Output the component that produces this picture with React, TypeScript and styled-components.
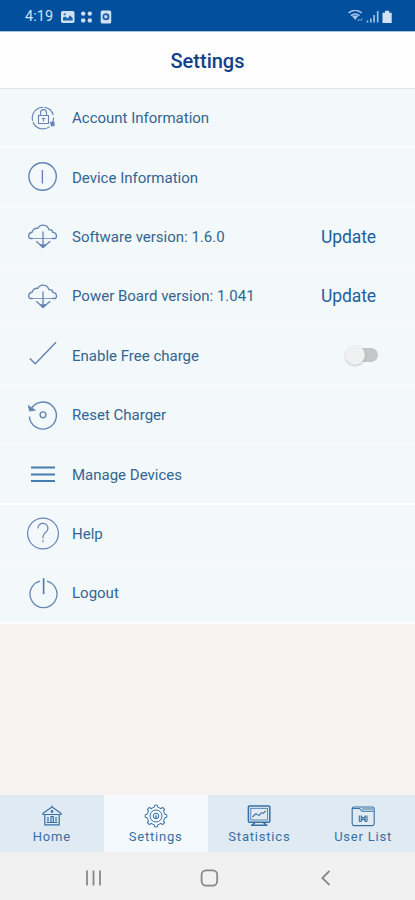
import React from "react";
import styled, { createGlobalStyle } from "styled-components";

const GlobalStyle = createGlobalStyle`
  * { box-sizing: border-box; }
  html, body { margin: 0; padding: 0; }
  body { font-family: Roboto, "Liberation Sans", sans-serif; background: #f7f1f1; }
  button { font: inherit; border: 0; padding: 0; background: none; color: inherit; }
  svg { display: block; flex: none; }
`;

const Screen = styled.div`
  display: flex;
  flex-direction: column;
  width: 415px;
  height: 900px;
  overflow: hidden;
  background: #f7f1f1;
`;

const StatusBar = styled.div`
  display: flex;
  align-items: center;
  flex: none;
  height: 31px;
  padding: 2px 22px 0 25px;
  background: #02509d;
  color: #cfe0f5;
`;

const Clock = styled.span`
  width: 36px;
  font-size: 14.5px;
  line-height: 18px;
  letter-spacing: 0.1px;
`;

const StatusSpacer = styled.div`
  flex: 1;
`;

const Header = styled.header`
  display: flex;
  align-items: center;
  justify-content: center;
  flex: none;
  height: 58px;
  padding-top: 1px;
  background: #fefefe;
  border-top: 1px solid #a9c3de;
  border-bottom: 1px solid #dfe4e8;
`;

const Title = styled.h1`
  margin: 0;
  font-size: 20px;
  line-height: 24px;
  font-weight: 500;
  color: #12418a;
`;

const List = styled.div`
  flex: none;
`;

const Row = styled.div<{ $line: string }>`
  display: flex;
  align-items: center;
  height: 59.4px;
  padding: 0 36px 0 26px;
  background: #f3f8fb;
  border-bottom: 2px solid ${(p) => p.$line};
  color: #326591;
`;

const IconSlot = styled.div`
  display: flex;
  justify-content: center;
  width: 34px;
  margin-right: 12px;
  color: #6485b5;
`;

const Label = styled.span`
  flex: 1;
  padding-top: 1px;
  font-size: 15px;
  line-height: 20px;
  white-space: nowrap;
`;

const UpdateButton = styled.button`
  width: 58px;
  padding-top: 1px;
  text-align: left;
  font-size: 17.5px;
  line-height: 22px;
  letter-spacing: -0.1px;
  color: #1b609c;
`;

const SwitchTrack = styled.div`
  position: relative;
  width: 28px;
  height: 14px;
  margin-right: 1px;
  border-radius: 7px;
  background: #c4c6c7;
`;

const SwitchKnob = styled.div`
  position: absolute;
  left: -5px;
  top: -3px;
  width: 20px;
  height: 20px;
  border-radius: 50%;
  background: #eff0f0;
  box-shadow: 0 1px 2px rgba(0, 0, 0, 0.22);
`;

const Filler = styled.div`
  flex: 1;
`;

const TabBar = styled.nav`
  display: grid;
  grid-template-columns: repeat(4, 1fr);
  flex: none;
  height: 57px;
`;

const Tab = styled.button<{ $active?: boolean }>`
  display: flex;
  flex-direction: column;
  align-items: center;
  padding-top: 9px;
  background: ${(p) => (p.$active ? "#f3f9fd" : "#e0eaf2")};
  color: #3770a4;
`;

const TabLabel = styled.span`
  margin-top: 1px;
  font-size: 13px;
  line-height: 16px;
  letter-spacing: 0.8px;
  white-space: nowrap;
`;

const SystemNav = styled.div`
  display: flex;
  align-items: center;
  flex: none;
  height: 48px;
  padding: 4px 82px 0;
  justify-content: space-between;
  background: #f1f1f1;
  color: #888;
`;

type StrokeProps = { w: number; h?: number; sw?: number; children: React.ReactNode };

const Stroke = ({ w, h = w, sw = 1.3, children }: StrokeProps) => (
  <svg width={w} height={h} viewBox={`0 0 ${w} ${h}`} fill="none" stroke="currentColor" strokeWidth={sw}>
    {children}
  </svg>
);

const AccountIcon = () => (
  <Stroke w={32} sw={1.1}>
    <path d="M22.6 24.6A10.8 10.8 0 1 1 26.3 13" strokeDasharray="20 1.2" />
    <path d="M26.6 15.5q0 2.5-1 4.6" />
    <path d="M23.6 20.4l3.3-.4.2 3.6-2.6.2z" fill="currentColor" />
    <path d="M11.5 13.5h10v8h-10zM13.5 13.5v-2.9a3 3 0 0 1 6 0v2.9M16.5 15.8v3.8M14.8 16.5h3.4" />
  </Stroke>
);

const DeviceIcon = () => (
  <Stroke w={32} sw={1.4}>
    <circle cx="15.6" cy="15.5" r="13.7" />
    <path d="M15.4 9v13.5" />
  </Stroke>
);

const CloudIcon = () => (
  <Stroke w={32}>
    <path d="M5.5 18.5H3.2C.8 17.5 1.1 12.8 5.3 12 5.8 9 8.8 7.7 10.7 8.5c2.4-4.6 9.2-4.7 11.2 1.1 2.3-.3 3.8.8 3.6 2.5 4.2.2 5 5 2.8 6.4h-3.1" />
    <path d="M3.5 18.5h25" strokeWidth="1" opacity=".8" />
    <path d="M16 11.5v15.5M9.2 21.2l6.8 6 7.2-6" />
    <path d="M13.4 25l2.6 2.5 2.8-2.5z" fill="currentColor" />
  </Stroke>
);

const CheckIcon = () => (
  <Stroke w={32} sw={1.5}>
    <path d="M2.8 19.5l5.5 5.2L29 3.2" />
  </Stroke>
);

const ResetIcon = () => (
  <Stroke w={32} sw={1.4}>
    <path d="M3.8 10.5A13.5 13.5 0 1 1 2.4 17.5" />
    <path d="M1.8 7.2l1 4.6 4.6-.8z" fill="currentColor" />
    <circle cx="16" cy="15.8" r="2.9" />
  </Stroke>
);

const MenuIcon = () => (
  <Stroke w={24} h={18} sw={2}>
    <path d="M0 2.5h24M0 9.4h24M0 16h24" stroke="#477dae" />
  </Stroke>
);

const HelpIcon = () => (
  <Stroke w={34} sw={1.2}>
    <circle cx="17" cy="17.5" r="15.4" />
    <path d="M11.9 12.5c.2-7.2 10.5-6.5 10 .2-.3 4-4.9 3.7-4.9 8v1.8M17 24.3v2" />
  </Stroke>
);

const LogoutIcon = () => (
  <Stroke w={32} sw={1.3}>
    <path d="M13 4.1a13.5 13.5 0 1 0 7 0" />
    <path d="M16.6 1.2v16" strokeWidth="1.6" stroke="#477dae" />
  </Stroke>
);

const HomeIcon = () => (
  <Stroke w={24} sw={1.2}>
    <path d="M3 9.2L12 3l9 6.2v1.3H3zM4.8 10.5v10.3h14.4V10.5M4.5 20.8h15M12 3V1.4M8 13v4.5M11 12.5h2.3v6H11zM16 13v4.5M6.5 18.5h11" />
    <circle cx="12" cy="7.5" r=".8" />
  </Stroke>
);

const teeth = Array.from({ length: 8 }, (_, i) => i * 45);

const GearIcon = () => (
  <Stroke w={24} sw={1}>
    <circle cx="12" cy="12" r="6" />
    <circle cx="12" cy="12" r="2.8" />
    {teeth.map((a) => (
      <path key={a} d="M8.6 3.8l1.6-.5.4-2.1h2.8l.4 2.1 1.6.5" transform={`rotate(${a} 12 12)`} />
    ))}
    <path d="M12 10.8v2.4M10.8 13.2h2.4" />
  </Stroke>
);

const ChartIcon = () => (
  <Stroke w={24} sw={1.5}>
    <rect x="1.4" y="2" width="21.4" height="16.3" rx="1" />
    <rect x="3.8" y="4.3" width="16.6" height="11.7" strokeWidth=".8" />
    <path d="M5.5 13l3.4-3.4 3.2 2 2.3-3 1.8.8 2.5-2.6" strokeWidth="1.1" />
    <path d="M8 18.5L5 21.3M16.4 18.5l3 2.8M4 21.3h16.5" />
  </Stroke>
);

const FolderIcon = () => (
  <Stroke w={24} sw={1.1}>
    <rect x="1.2" y="3" width="22" height="18.6" rx="1.8" />
    <path d="M1.5 4.5h7l2.5 2.8h11.8M11 5h11" />
    <path d="M8.3 11.5v6M10.2 11.5v6M14.2 11.5v6M16 11.5v6M8.3 17.5h2M14 17.5h2M10.2 12l4 5M14.2 12l-4 5" />
  </Stroke>
);

const StatusGlyphs = () => (
  <svg width="52" height="14" viewBox="0 0 52 14" fill="#cfe0f5">
    <rect x="0" y="1" width="13.5" height="12" rx="1.8" />
    <path d="M2 10.5V7.5l2.5-1 2.2 2 2.3-3.2 2.7 3v2.2z" fill="#1d63aa" />
    <circle cx="3.6" cy="4.2" r="1" fill="#1d63aa" />
    <circle cx="22.2" cy="3.6" r="2.2" />
    <circle cx="28.8" cy="3.6" r="2.2" />
    <circle cx="22.2" cy="10.4" r="2.2" />
    <circle cx="28.8" cy="10.4" r="2.2" />
    <rect x="39.7" y=".5" width="10.5" height="13" rx="1.6" />
    <circle cx="45" cy="6.8" r="3.5" fill="#1d63aa" />
    <path d="M43.4 5.2h1.9a1.6 1.6 0 1 1-1.9 2.2z" />
  </svg>
);

const SignalGlyphs = () => (
  <svg width="45" height="14" viewBox="0 0 45 14" fill="none" stroke="#a9c6e8" strokeWidth="1.6">
    <path d="M.5 3C4.5-.4 9.8-.4 13.8 3M2.8 5.6c2.7-2 6-2 8.7 0" />
    <path d="M3.6 5.6h7L7.2 10z" fill="#a9c6e8" stroke="none" />
    <path d="M10 11l1.5-2M12.7 10.6l1.4-2" strokeWidth="1" />
    <path d="M19.5 12.5v-2M22.8 12.5v-4M26.1 12.5V5M29.7 12.5V1" />
    <path d="M34.5 2.7h2.5V.7h4.2v2h2.5v10.3h-9.2z" fill="#d3e2f2" stroke="none" />
  </svg>
);

type Item = { label: string; icon: React.ReactNode; line: string; action?: "update" | "switch" };

const items: Item[] = [
  { label: "Account Information", icon: <AccountIcon />, line: "#fbfeff" },
  { label: "Device Information", icon: <DeviceIcon />, line: "#f6fafc" },
  { label: "Software version: 1.6.0", icon: <CloudIcon />, line: "#f5f9fc", action: "update" },
  { label: "Power Board version: 1.041", icon: <CloudIcon />, line: "#f5f9fc", action: "update" },
  { label: "Enable Free charge", icon: <CheckIcon />, line: "#f7fafc", action: "switch" },
  { label: "Reset Charger", icon: <ResetIcon />, line: "#f7fafc" },
  { label: "Manage Devices", icon: <MenuIcon />, line: "#fcfeff" },
  { label: "Help", icon: <HelpIcon />, line: "#f5f9fc" },
  { label: "Logout", icon: <LogoutIcon />, line: "#fdfdfd" },
];

const tabs = [
  { label: "Home", icon: <HomeIcon /> },
  { label: "Settings", icon: <GearIcon />, active: true },
  { label: "Statistics", icon: <ChartIcon /> },
  { label: "User List", icon: <FolderIcon /> },
];

export default function App() {
  return (
    <>
      <GlobalStyle />
      <Screen>
        <StatusBar>
          <Clock>4:19</Clock>
          <StatusGlyphs />
          <StatusSpacer />
          <SignalGlyphs />
        </StatusBar>
        <Header>
          <Title>Settings</Title>
        </Header>
        <List>
          {items.map((item) => (
            <Row key={item.label} $line={item.line}>
              <IconSlot>{item.icon}</IconSlot>
              <Label>{item.label}</Label>
              {item.action === "update" && <UpdateButton>Update</UpdateButton>}
              {item.action === "switch" && (
                <SwitchTrack role="switch" aria-checked={false}>
                  <SwitchKnob />
                </SwitchTrack>
              )}
            </Row>
          ))}
        </List>
        <Filler />
        <TabBar>
          {tabs.map((tab) => (
            <Tab key={tab.label} $active={tab.active}>
              {tab.icon}
              <TabLabel>{tab.label}</TabLabel>
            </Tab>
          ))}
        </TabBar>
        <SystemNav>
          <Stroke w={24} h={18} sw={1.8}>
            <path d="M5 1.5v15M11.5 1.5v15M18 1.5v15" />
          </Stroke>
          <Stroke w={20} h={18} sw={1.8}>
            <rect x="1.6" y="1.4" width="15.6" height="15.2" rx="4.5" />
          </Stroke>
          <Stroke w={20} h={18} sw={1.8}>
            <path d="M16.5 2L9.3 9l7.2 7" />
          </Stroke>
        </SystemNav>
      </Screen>
    </>
  );
}
